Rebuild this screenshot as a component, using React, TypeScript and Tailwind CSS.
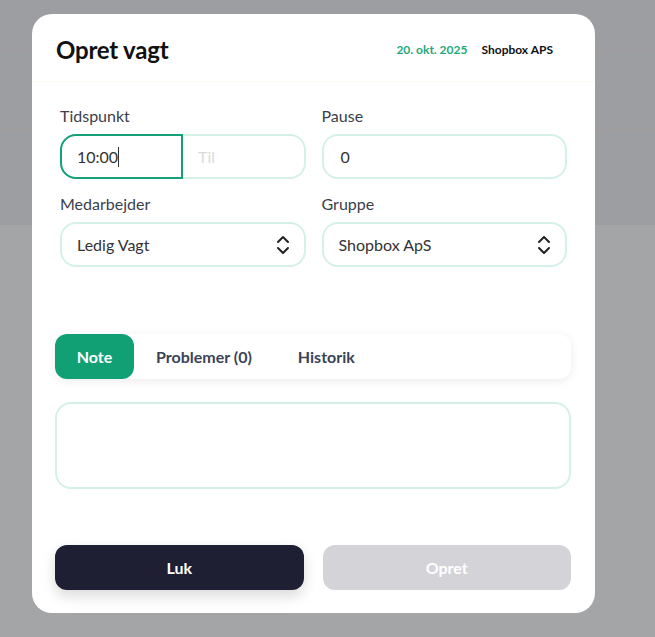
import React from 'react';

const font = { fontFamily: 'Lato, "Noto Sans", sans-serif' };

const UpDown: React.FC = () => (
  <svg width="14" height="20" viewBox="0 0 14 20" fill="none" stroke="#222" strokeWidth="2" strokeLinecap="round" strokeLinejoin="round">
    <path d="M2 7l5-5 5 5" />
    <path d="M2 13l5 5 5-5" />
  </svg>
);

export default function App() {
  return (
    <div className="relative w-[655px] h-[637px] overflow-hidden bg-[#a4a5a7]" style={font}>
      {/* page behind the overlay */}
      <div className="h-[225px] bg-[#9d9ea2] flex flex-col">
        <div className="h-[49px]" />
        <div className="h-px bg-[#a39c9c]" />
        <div className="h-[78px]" />
        <div className="h-px bg-[#a39c9c]" />
      </div>

      {/* modal */}
      <div className="absolute left-[32px] top-[14px] w-[563px] h-[599px] bg-white rounded-[20px] flex flex-col">
        <div className="flex items-center justify-between h-[68px] pl-6 pr-[42px] border-b border-[#fdfaf3]">
          <h1 className="text-[24px] font-bold text-[#111] tracking-[-0.2px] pt-1">Opret vagt</h1>
          <div className="flex items-center gap-[14px] text-[12px] font-bold pt-1">
            <span className="text-[#1fa87a]">20. okt. 2025</span>
            <span className="text-[#111]">Shopbox APS</span>
          </div>
        </div>

        <div className="px-7 pt-[24px] grid grid-cols-2 gap-x-4">
          <div className="flex flex-col">
            <label className="text-[16px] text-[#3a3f4b] leading-5 mb-[8px]">Tidspunkt</label>
            <div className="flex h-[45px] rounded-[16px] border-2 border-[#d5f1e6]">
              <div className="w-[123px] -ml-[2px] -my-[2px] border-2 border-[#16a07a] rounded-l-[16px] flex items-center pl-[15px] text-[16px] text-[#333]">
                10:00<span className="w-px h-5 bg-[#333]" />
              </div>
              <div className="flex items-center pl-[15px] text-[16px] text-[#d9dbde]">Til</div>
            </div>
          </div>
          <div className="flex flex-col">
            <label className="text-[16px] text-[#3a3f4b] leading-5 mb-[8px]">Pause</label>
            <div className="h-[45px] rounded-[16px] border-2 border-[#d5f1e6] flex items-center pl-[17px] text-[16px] text-[#333]">0</div>
          </div>
          <div className="flex flex-col mt-[15px]">
            <label className="text-[16px] text-[#3a3f4b] leading-5 mb-[8px]">Medarbejder</label>
            <div className="h-[45px] rounded-[16px] border-2 border-[#d5f1e6] flex items-center justify-between pl-[15px] pr-[14px] text-[16px] text-[#333]">
              <span>Ledig Vagt</span>
              <UpDown />
            </div>
          </div>
          <div className="flex flex-col mt-[15px]">
            <label className="text-[16px] text-[#3a3f4b] leading-5 mb-[8px]">Gruppe</label>
            <div className="h-[45px] rounded-[16px] border-2 border-[#d5f1e6] flex items-center justify-between pl-[15px] pr-[14px] text-[16px] text-[#333]">
              <span>Shopbox ApS</span>
              <UpDown />
            </div>
          </div>
        </div>

        <div className="px-[23px] pr-6 mt-[67px]">
          <div className="flex items-center h-[45px] rounded-[12px] bg-white shadow-[0_2px_10px_rgba(0,0,0,0.08)] text-[16px] font-bold text-[#3a4456]">
            <div className="h-full w-[79px] rounded-[12px] bg-[#10a074] text-white flex items-center justify-center">Note</div>
            <div className="pl-[22px]">Problemer (0)</div>
            <div className="pl-[46px]">Historik</div>
          </div>
          <div className="mt-[23px] h-[87px] rounded-[16px] border-2 border-[#d5f1e6]" />
        </div>

        <div className="px-[23px] pr-6 mt-[56px] grid grid-cols-2 gap-[19px]">
          <button className="h-[45px] rounded-[12px] bg-[#1e1f33] text-white text-[16px] font-bold shadow-[0_6px_14px_rgba(0,0,0,0.15)]">Luk</button>
          <button className="h-[45px] rounded-[12px] bg-[#d3d3d8] text-white text-[16px] font-bold">Opret</button>
        </div>
      </div>
    </div>
  );
}
